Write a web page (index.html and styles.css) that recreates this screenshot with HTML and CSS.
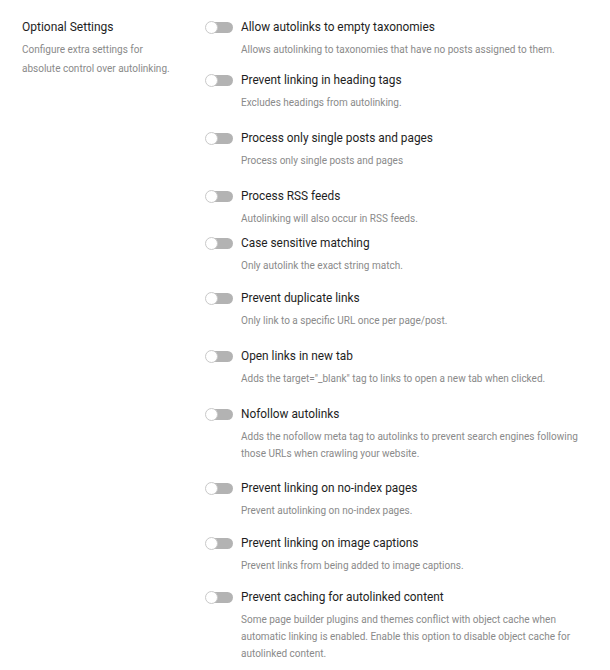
FILE: index.html
```html
<!DOCTYPE html>
<html>
<head>
<meta charset="utf-8">
<link rel="stylesheet" href="styles.css">
</head>
<body>
<div class="page">
  <div class="intro">
    <h2 class="intro-title">Optional Settings</h2>
    <p class="intro-desc">Configure extra settings for absolute control over autolinking.</p>
  </div>
  <div class="options">
    <div class="opt gap-a">
      <div class="opt-head"><span class="toggle"></span><span class="opt-title">Allow autolinks to empty taxonomies</span></div>
      <p class="opt-desc">Allows autolinking to taxonomies that have no posts assigned to them.</p>
    </div>
    <div class="opt gap-b">
      <div class="opt-head"><span class="toggle"></span><span class="opt-title">Prevent linking in heading tags</span></div>
      <p class="opt-desc">Excludes headings from autolinking.</p>
    </div>
    <div class="opt gap-b">
      <div class="opt-head"><span class="toggle"></span><span class="opt-title">Process only single posts and pages</span></div>
      <p class="opt-desc">Process only single posts and pages</p>
    </div>
    <div class="opt gap-c">
      <div class="opt-head"><span class="toggle"></span><span class="opt-title">Process RSS feeds</span></div>
      <p class="opt-desc">Autolinking will also occur in RSS feeds.</p>
    </div>
    <div class="opt gap-d">
      <div class="opt-head"><span class="toggle"></span><span class="opt-title">Case sensitive matching</span></div>
      <p class="opt-desc">Only autolink the exact string match.</p>
    </div>
    <div class="opt gap-b">
      <div class="opt-head"><span class="toggle"></span><span class="opt-title">Prevent duplicate links</span></div>
      <p class="opt-desc">Only link to a specific URL once per page/post.</p>
    </div>
    <div class="opt gap-b">
      <div class="opt-head"><span class="toggle"></span><span class="opt-title">Open links in new tab</span></div>
      <p class="opt-desc">Adds the target="_blank" tag to links to open a new tab when clicked.</p>
    </div>
    <div class="opt gap-e">
      <div class="opt-head"><span class="toggle"></span><span class="opt-title">Nofollow autolinks</span></div>
      <p class="opt-desc">Adds the nofollow meta tag to autolinks to prevent search engines following those URLs when crawling your website.</p>
    </div>
    <div class="opt gap-d">
      <div class="opt-head"><span class="toggle"></span><span class="opt-title">Prevent linking on no-index pages</span></div>
      <p class="opt-desc">Prevent autolinking on no-index pages.</p>
    </div>
    <div class="opt gap-f">
      <div class="opt-head"><span class="toggle"></span><span class="opt-title">Prevent linking on image captions</span></div>
      <p class="opt-desc">Prevent links from being added to image captions.</p>
    </div>
    <div class="opt">
      <div class="opt-head"><span class="toggle"></span><span class="opt-title">Prevent caching for autolinked content</span></div>
      <p class="opt-desc">Some page builder plugins and themes conflict with object cache when automatic linking is enabled. Enable this option to disable object cache for autolinked content.</p>
    </div>
  </div>
</div>
</body>
</html>
```

FILE: styles.css
```css
html, body {
  margin: 0;
  padding: 0;
  background: #ffffff;
}
body {
  font-family: Roboto, "Liberation Sans", sans-serif;
}
.page {
  display: flex;
  padding: 19px 0 0 22px;
}
.intro {
  width: 184px;
  flex: none;
}
.intro-title {
  margin: 0;
  font-size: 12px;
  font-weight: 400;
  line-height: 17px;
  color: #1e1e1e;
}
.intro-desc {
  margin: 4px 0 0;
  font-size: 10px;
  line-height: 19px;
  color: #8a8a8a;
  width: 160px;
}
.options {
  display: flex;
  flex-direction: column;
  width: 380px;
}
.opt-head {
  display: flex;
  align-items: center;
  gap: 8px;
  height: 17px;
}
.toggle {
  position: relative;
  width: 27px;
  height: 11px;
  border-radius: 6px;
  background: #b3b3b3;
  flex: none;
}
.toggle::before {
  content: "";
  position: absolute;
  left: -1px;
  top: -1px;
  width: 11px;
  height: 11px;
  border-radius: 50%;
  background: #fff;
  border: 1px solid #c9c9c9;
}
.opt-title {
  font-size: 11.85px;
  line-height: 17px;
  color: #1e1e1e;
}
.opt-desc {
  margin: 5px 0 0 35px;
  font-size: 10px;
  line-height: 17px;
  color: #8a8a8a;
}
.opt {
  margin-bottom: 17px;
}
.gap-a { margin-bottom: 14px; }
.gap-b { margin-bottom: 19px; }
.gap-c { margin-bottom: 8px; }
.gap-d { margin-bottom: 16px; }
.gap-e { margin-bottom: 18px; }
.gap-f { margin-bottom: 15px; }
```
